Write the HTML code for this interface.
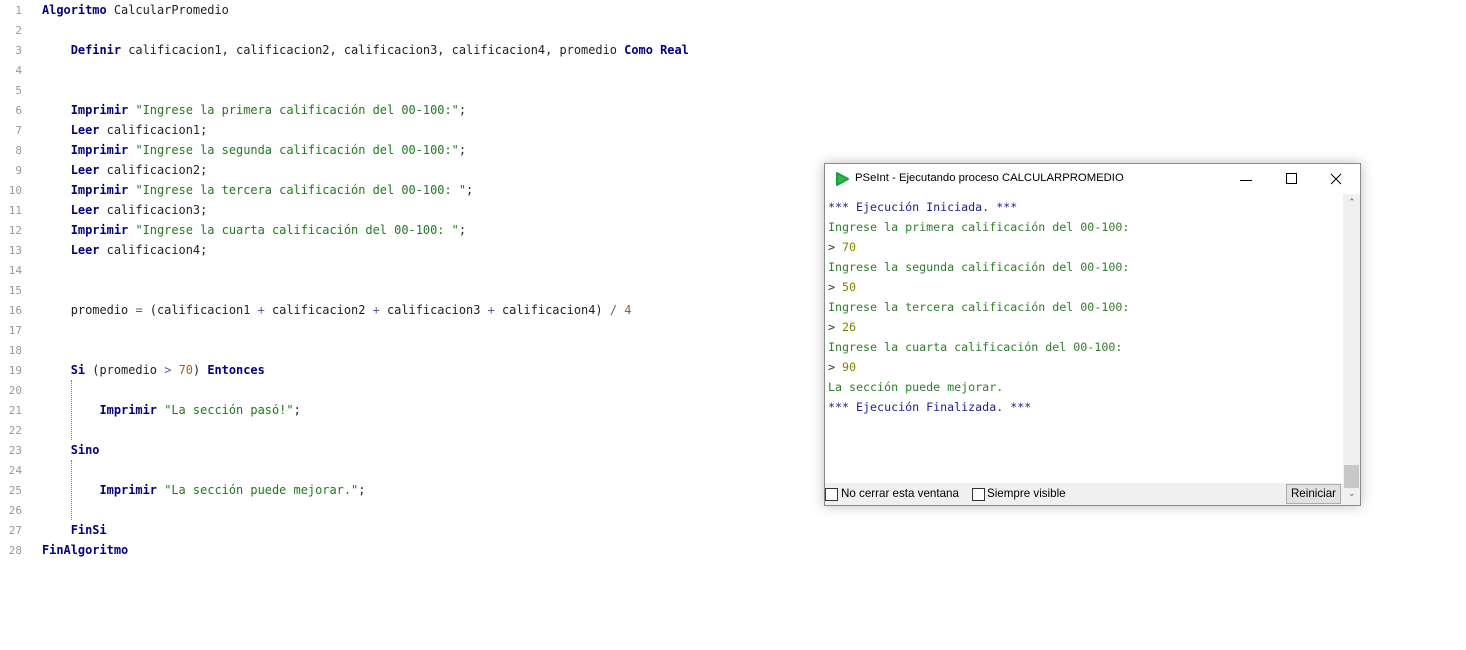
<!DOCTYPE html><html><head><meta charset="utf-8"><style>
body{margin:0;width:1466px;height:650px;background:#fff;position:relative;overflow:hidden}
.ed{position:absolute;left:0;top:0;font-family:"DejaVu Sans Mono","Liberation Mono",monospace;font-size:12px}
.l{position:absolute;left:42px;height:20px;line-height:20px;white-space:pre;color:#222;font-size:11.95px}
.n{position:absolute;left:0;width:22px;text-align:right;height:20px;line-height:21px;color:#999;font-size:11px}
.k{color:#000080;font-weight:bold}.s{color:#1f7a1f}.d{color:#b05a1a}.o{color:#5a5aa0}
.g{position:absolute;left:71px;border-left:1px dotted #777}
.w{position:absolute;left:824px;top:163px;width:535px;height:341px;border:1px solid #8a8a8a;background:#fff;box-shadow:0 0 12px rgba(0,0,0,.25);font-family:"Liberation Sans",sans-serif}
.t{position:absolute;left:30px;top:8px;font-size:11.3px;color:#000}
.c{position:absolute;left:3px;font-family:"DejaVu Sans Mono",monospace;font-size:11.65px;line-height:20px;white-space:pre}
.b{color:#22228c}.gr{color:#2e7d2e}.p{color:#333}.v{color:#808000}
.sb{position:absolute;left:518px;top:30px;width:17px;height:311px;background:#f0f0f0}
.bot{position:absolute;left:0;top:319px;width:518px;height:22px;background:#f0f0f0;font-size:11.6px}
.cb{position:absolute;top:5px;width:11px;height:11px;border:1px solid #333;background:#fff}
</style></head><body>
<div class="ed">
<div class="n" style="top:0">1</div><div class="l" style="top:0"><span class="k">Algoritmo</span> CalcularPromedio</div>
<div class="n" style="top:20px">2</div>
<div class="n" style="top:40px">3</div><div class="l" style="top:40px">    <span class="k">Definir</span> calificacion1, calificacion2, calificacion3, calificacion4, promedio <span class="k">Como Real</span></div>
<div class="n" style="top:60px">4</div><div class="n" style="top:80px">5</div>
<div class="n" style="top:100px">6</div><div class="l" style="top:100px">    <span class="k">Imprimir</span> <span class="s">"Ingrese la primera calificación del 00-100:"</span>;</div>
<div class="n" style="top:120px">7</div><div class="l" style="top:120px">    <span class="k">Leer</span> calificacion1;</div>
<div class="n" style="top:140px">8</div><div class="l" style="top:140px">    <span class="k">Imprimir</span> <span class="s">"Ingrese la segunda calificación del 00-100:"</span>;</div>
<div class="n" style="top:160px">9</div><div class="l" style="top:160px">    <span class="k">Leer</span> calificacion2;</div>
<div class="n" style="top:180px">10</div><div class="l" style="top:180px">    <span class="k">Imprimir</span> <span class="s">"Ingrese la tercera calificación del 00-100: "</span>;</div>
<div class="n" style="top:200px">11</div><div class="l" style="top:200px">    <span class="k">Leer</span> calificacion3;</div>
<div class="n" style="top:220px">12</div><div class="l" style="top:220px">    <span class="k">Imprimir</span> <span class="s">"Ingrese la cuarta calificación del 00-100: "</span>;</div>
<div class="n" style="top:240px">13</div><div class="l" style="top:240px">    <span class="k">Leer</span> calificacion4;</div>
<div class="n" style="top:260px">14</div><div class="n" style="top:280px">15</div>
<div class="n" style="top:300px">16</div><div class="l" style="top:300px">    promedio <span class="o">=</span> (calificacion1 <span class="o">+</span> calificacion2 <span class="o">+</span> calificacion3 <span class="o">+</span> calificacion4) <span class="o">/</span> <span class="d">4</span></div>
<div class="n" style="top:320px">17</div><div class="n" style="top:340px">18</div>
<div class="n" style="top:360px">19</div><div class="l" style="top:360px">    <span class="k">Si</span> (promedio <span class="o">&gt;</span> <span class="d">70</span>) <span class="k">Entonces</span></div>
<div class="n" style="top:380px">20</div>
<div class="n" style="top:400px">21</div><div class="l" style="top:400px">        <span class="k">Imprimir</span> <span class="s">"La sección pasó!"</span>;</div>
<div class="n" style="top:420px">22</div>
<div class="n" style="top:440px">23</div><div class="l" style="top:440px">    <span class="k">Sino</span></div>
<div class="n" style="top:460px">24</div>
<div class="n" style="top:480px">25</div><div class="l" style="top:480px">        <span class="k">Imprimir</span> <span class="s">"La sección puede mejorar."</span>;</div>
<div class="n" style="top:500px">26</div>
<div class="n" style="top:520px">27</div><div class="l" style="top:520px">    <span class="k">FinSi</span></div>
<div class="n" style="top:540px">28</div><div class="l" style="top:540px"><span class="k">FinAlgoritmo</span></div>
<div class="g" style="top:380px;height:60px"></div>
<div class="g" style="top:460px;height:60px"></div>
</div>
<div class="w">
<svg style="position:absolute;left:10px;top:8px" width="14" height="14"><path d="M2 1 L13 7 L2 13 Z" fill="#2db84a" stroke="#1e9e3a" stroke-linejoin="round" stroke-width="2"/></svg>
<div class="t">PSeInt - Ejecutando proceso CALCULARPROMEDIO</div>
<svg style="position:absolute;left:408px;top:4px" width="125" height="22" stroke="#000" fill="none" stroke-width="1"><path d="M7 12.5h12"/><rect x="53.5" y="5.5" width="10" height="10"/><path d="M98 6l10 10M108 6l-10 10"/></svg>
<div class="c" style="top:33px"><span class="b">*** Ejecución Iniciada. ***</span>
<span class="gr">Ingrese la primera calificación del 00-100:</span>
<span class="p">&gt; </span><span class="v">70</span>
<span class="gr">Ingrese la segunda calificación del 00-100:</span>
<span class="p">&gt; </span><span class="v">50</span>
<span class="gr">Ingrese la tercera calificación del 00-100:</span>
<span class="p">&gt; </span><span class="v">26</span>
<span class="gr">Ingrese la cuarta calificación del 00-100:</span>
<span class="p">&gt; </span><span class="v">90</span>
<span class="gr">La sección puede mejorar.</span>
<span class="b">*** Ejecución Finalizada. ***</span></div>
<div class="sb"><div style="position:absolute;top:3px;left:5px;font-size:9px;color:#666">&#8963;</div><div style="position:absolute;left:1px;top:271px;width:15px;height:23px;background:#c8c8c8"></div><div style="position:absolute;top:294px;left:5px;font-size:9px;color:#666">&#8964;</div></div>
<div class="bot"><div class="cb" style="left:0"></div><span style="position:absolute;left:16px;top:4px">No cerrar esta ventana</span><div class="cb" style="left:147px"></div><span style="position:absolute;left:162px;top:4px">Siempre visible</span>
<div style="position:absolute;left:461px;top:1px;width:53px;height:18px;border:1px solid #adadad;background:#e1e1e1;text-align:center;line-height:18px">Reiniciar</div></div>
</div>
</body></html>
